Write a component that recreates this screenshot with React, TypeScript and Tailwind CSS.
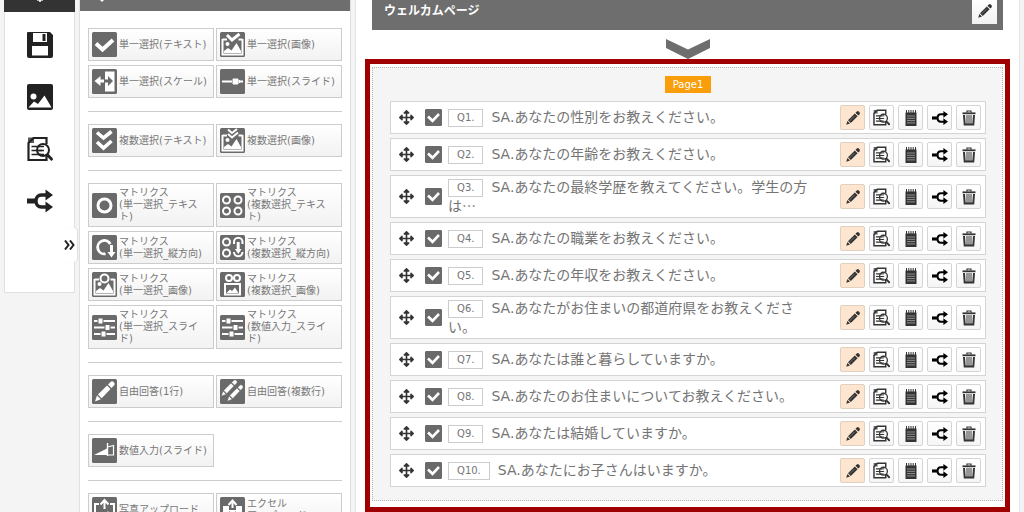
import type { ReactNode } from "react";
import { FaArrowsAlt } from "react-icons/fa";

type IconProps = { className?: string };

function SaveIcon({ className }: IconProps) {
  return (
    <svg viewBox="0 0 26 26" className={className} fill="currentColor">
      <path
        fillRule="evenodd"
        d="M1 0H23L26 3V24a2 2 0 0 1-2 2H2a2 2 0 0 1-2-2V1a1 1 0 0 1 1-1ZM6 1v9h14V1ZM5 14v9.500h16V14Z"
      />
      <path d="M15.500 2h3v7h-3z" />
    </svg>
  );
}

function ImageIcon({ className }: IconProps) {
  return (
    <svg viewBox="0 0 26 26" className={className}>
      <rect width="26" height="26" rx="2" fill="currentColor" />
      <circle cx="6.500" cy="12.500" r="3" fill="#fff" />
      <path d="M1.500 23.500 L7 17.500 L11 20 L17.500 11.500 L24.500 23.500Z" fill="#fff" />
    </svg>
  );
}

function PreviewIcon({ className }: IconProps) {
  return (
    <svg viewBox="0 0 26 26" className={className} fill="none" stroke="currentColor" strokeWidth="2.200">
      <path d="M19.500 8V2H6.500L1.500 7V24H19.500V20" />
      <path d="M1 1.500 7 1.500V7H1Z" fill="currentColor" stroke="none" opacity=".75" />
      <path d="M4.500 10.500H13M4.500 14.500H15M4.500 18.500H14" strokeWidth="1.700" />
      <circle cx="16" cy="14" r="6" strokeWidth="2" />
      <path d="M12 10.500H17M11 14.500H17M12 18.500H17" strokeWidth="1.500" />
      <path d="M20 18.500 L25.500 24" strokeWidth="3" />
    </svg>
  );
}

function BranchIcon({ className }: IconProps) {
  return (
    <svg viewBox="0 0 26 26" className={className} fill="none" stroke="currentColor" strokeWidth="3.400">
      <path d="M0 13H8" strokeWidth="5" />
      <path d="M20 7H14.500C11 7 9 9.500 9 13s2 6 5.500 6H20" />
      <path d="M18.500 1.500 26 7 18.500 12.500ZM18.500 13.500 26 19 18.500 24.500Z" fill="currentColor" stroke="none" />
    </svg>
  );
}

function PencilIcon({ className }: IconProps) {
  return (
    <svg viewBox="0 0 16 16" className={className} fill="currentColor">
      <path d="M1.200 14.800 2.400 11 5 13.600Z" />
      <path d="M3 10.200 9.800 3.400 12.600 6.200 5.800 13Z" />
      <path d="M10.500 2.700 11.800 1.500a1.500 1.500 0 0 1 2 0l.7.7a1.500 1.500 0 0 1 0 2L13.300 5.500Z" />
      <path d="M4.600 10.900 9.600 5.900" stroke="#999" strokeWidth=".6" />
    </svg>
  );
}

function NotepadIcon({ className }: IconProps) {
  return (
    <svg viewBox="0 0 16 16" className={className}>
      <path d="M2.500 2.500h11V16h-11z" fill="currentColor" />
      <path d="M3.500 0v3M5.800 0v3M8 0v3M10.200 0v3M12.500 0v3" stroke="currentColor" strokeWidth="1" />
      <path d="M4 6h8M4 8.300h8M4 10.600h8M4 12.900h8" stroke="#aaa" strokeWidth=".8" />
    </svg>
  );
}

function TrashIcon({ className }: IconProps) {
  return (
    <svg viewBox="0 0 16 16" className={className} fill="none" stroke="currentColor">
      <path d="M1.500 3.300h13" strokeWidth="1.800" />
      <path d="M6 2.500V1h4v1.500" strokeWidth="1.200" />
      <path d="M3 5 3.700 14.500h8.600L13 5" strokeWidth="2" />
      <path d="M6 5v9M8 5v9M10 5v9" strokeWidth="1" />
    </svg>
  );
}

const picture = (
  <>
    <path d="M2.500 7V22.500H22.500V7" />
    <path d="M2.500 7.500H7M18.500 7.500H22.500" />
    <path d="M4 21V19L8 16 11.500 18.500 16.500 11 21 19V21Z" fill="#fff" stroke="none" />
    <circle cx="7.500" cy="12" r="2" fill="#fff" stroke="none" />
  </>
);

const sliders = (
  <>
    <path d="M2 6H23M2 12.500H23M2 19H23" />
    <path d="M6 3h5v6H6zM13 9.500h5v6h-5zM9 16h5v6H9z" fill="#fff" stroke="#6a6a6a" strokeWidth="1" />
  </>
);

const pen = (
  <>
    <path d="M3 22.500 5 16.500 8.800 20.300Z" />
    <path d="M6 15.500 15 6.500 18.500 10 9.700 19.300Z" />
    <path d="M16 5.500 18.500 3a2 2 0 0 1 3 0l.5.500a2 2 0 0 1 0 3L19.500 9Z" />
  </>
);

const glyphs: Record<string, ReactNode> = {
  check: <path d="M4 11.500 10.500 17.500 21 8" strokeWidth="4" />,
  checkPicture: (
    <>
      {picture}
      <path d="M7 3 12 8 19.500 2" strokeWidth="3" />
    </>
  ),
  scale: (
    <>
      <path d="M13 2.500H22.500V22.500H13Z" fill="#fff" stroke="none" />
      <path d="M2.500 12 8.500 7V10.500H12V13.500H8.500V17Z" fill="#fff" stroke="none" />
      <path d="M21 12 16 7V10.500H13V13.500H16V17Z" fill="#6a6a6a" stroke="none" />
    </>
  ),
  slide: (
    <>
      <path d="M2 12.500H12M18.500 12.500H23" />
      <path d="M13 10h5v5h-5zM19.500 11v3" fill="#fff" strokeWidth="1" />
    </>
  ),
  doubleCheck: <path d="M5 4.500 11.500 10 19.500 3.500M5 14 11.500 20 19.500 13" strokeWidth="3.600" />,
  doubleCheckPicture: (
    <>
      {picture}
      <path d="M8 1.500 12 5 17 1M8 6 12 9.500 18 4.500" />
    </>
  ),
  circle: <circle cx="12.500" cy="12.500" r="6.500" strokeWidth="3" />,
  circles: (
    <>
      <circle cx="6.500" cy="7" r="3.500" />
      <circle cx="18" cy="7" r="3.500" />
      <circle cx="6.500" cy="18" r="3.500" />
      <circle cx="18" cy="18" r="3.500" />
    </>
  ),
  circleDown: (
    <>
      <path d="M13.500 18.800A6.700 6.700 0 1 1 18.300 9" strokeWidth="2.800" />
      <path d="M19.500 10V18" strokeWidth="3" />
      <path d="M15.500 17h8l-4 5.500Z" fill="#fff" stroke="none" />
    </>
  ),
  circlesDown: (
    <>
      <circle cx="6.500" cy="7" r="3.500" />
      <circle cx="6.500" cy="18" r="3.500" />
      <path d="M14 9V7a4 4 0 0 1 8.500 0V9M14 17a4 4 0 0 0 8.500 0" />
      <path d="M18.200 7V15" strokeWidth="3" />
      <path d="M15 14h6.500l-3.200 5Z" fill="#fff" stroke="none" />
    </>
  ),
  circlePicture: (
    <>
      {picture}
      <circle cx="12.500" cy="6.500" r="4" />
    </>
  ),
  circlesPicture: (
    <>
      <circle cx="9" cy="6" r="3" />
      <circle cx="17" cy="6" r="3" />
      <path d="M5 12H20V22.500H5Z" />
      <path d="M6.500 21 10 17.500 12 19 15 15.500 18.500 21Z" fill="#fff" stroke="none" />
    </>
  ),
  sliders,
  pen: (
    <g fill="#fff" stroke="none">
      {pen}
    </g>
  ),
  pens: (
    <g fill="#fff" stroke="#6a6a6a" strokeWidth=".4">
      <g transform="translate(-1 -1) scale(.8)">{pen}</g>
      <g transform="translate(5 4) scale(.8)">{pen}</g>
    </g>
  ),
  wedge: (
    <>
      <path d="M2 17 15 10.500V17Z" fill="#fff" stroke="none" />
      <path d="M15.500 9 21.500 7.500V17H15.500" strokeWidth="1.200" />
      <path d="M15.500 5V18" strokeWidth="1.400" />
    </>
  ),
  photoUpload: (
    <>
      <path d="M7 7H3V23H7M18 7H22V23H18" />
      <path d="M12.500 3V12M8.500 7.500 12.500 3 16.500 7.500" />
      <path d="M6 21 10 15 13 18 16 14 20 21Z" fill="#fff" stroke="none" />
    </>
  ),
  excelUpload: (
    <>
      <path d="M3 9H9V13H16V9H22V23H3Z" fill="#fff" stroke="none" />
      <path d="M12.500 11V4M8.500 8 12.500 3.500 16.500 8" />
      <path d="M9 15 16 22M16 15 9 22" stroke="#6a6a6a" />
    </>
  ),
};

function Glyph({ name }: { name: string }) {
  return (
    <svg viewBox="0 0 25 25" className="size-[25px] shrink-0" fill="none" stroke="#fff" strokeWidth="2">
      <rect width="25" height="25" rx="1.500" fill="#6a6a6a" stroke="none" />
      {glyphs[name]}
    </svg>
  );
}

type Tool = { icon: string; lines: string[]; tall?: boolean };

const toolGroups: Tool[][] = [
  [
    { icon: "check", lines: ["単一選択(テキスト)"] },
    { icon: "checkPicture", lines: ["単一選択(画像)"] },
    { icon: "scale", lines: ["単一選択(スケール)"] },
    { icon: "slide", lines: ["単一選択(スライド)"] },
  ],
  [
    { icon: "doubleCheck", lines: ["複数選択(テキスト)"] },
    { icon: "doubleCheckPicture", lines: ["複数選択(画像)"] },
  ],
  [
    { icon: "circle", lines: ["マトリクス", "(単一選択_テキスト)"], tall: true },
    { icon: "circles", lines: ["マトリクス", "(複数選択_テキスト)"], tall: true },
    { icon: "circleDown", lines: ["マトリクス", "(単一選択_縦方向)"] },
    { icon: "circlesDown", lines: ["マトリクス", "(複数選択_縦方向)"] },
    { icon: "circlePicture", lines: ["マトリクス", "(単一選択_画像)"] },
    { icon: "circlesPicture", lines: ["マトリクス", "(複数選択_画像)"] },
    { icon: "sliders", lines: ["マトリクス", "(単一選択_スライド)"], tall: true },
    { icon: "sliders", lines: ["マトリクス", "(数値入力_スライド)"], tall: true },
  ],
  [
    { icon: "pen", lines: ["自由回答(1行)"] },
    { icon: "pens", lines: ["自由回答(複数行)"] },
  ],
  [{ icon: "wedge", lines: ["数値入力(スライド)"] }],
  [
    { icon: "photoUpload", lines: ["写真アップロード"] },
    { icon: "excelUpload", lines: ["エクセル", "アップロード"] },
  ],
];

const questions = [
  "あなたの性別をお教えください。",
  "あなたの年齢をお教えください。",
  "あなたの最終学歴を教えてください。学生の方は…",
  "あなたの職業をお教えください。",
  "あなたの年収をお教えください。",
  "あなたがお住まいの都道府県をお教えください。",
  "あなたは誰と暮らしていますか。",
  "あなたのお住まいについてお教えください。",
  "あなたは結婚していますか。",
  "あなたにお子さんはいますか。",
];

const sideItems = [
  { label: "保存", Icon: SaveIcon },
  { label: "画像", Icon: ImageIcon },
  { label: "プレビュー", Icon: PreviewIcon },
  { label: "分岐", Icon: BranchIcon },
];

const actions = [
  { label: "編集", Icon: PencilIcon, size: "size-4", active: true },
  { label: "プレビュー", Icon: PreviewIcon, size: "size-[17px]" },
  { label: "メモ", Icon: NotepadIcon, size: "size-4" },
  { label: "分岐", Icon: BranchIcon, size: "size-4 text-black" },
  { label: "削除", Icon: TrashIcon, size: "size-4" },
];

function Sidebar() {
  return (
    <aside className="relative w-[71px] shrink-0 self-start">
      <div className="flex h-3 justify-center bg-[#333]">
        <svg viewBox="0 0 8 4" className="h-1 w-2" stroke="#fff" fill="none">
          <path d="M4 0V2" strokeWidth="1.600" />
          <path d="M1 .3H7" strokeWidth=".8" />
        </svg>
      </div>
      <nav className="flex flex-col items-center gap-[26px] border border-t-0 border-[#e0e0e0] bg-white pt-5 pb-[78px] text-[#222]">
        {sideItems.map(({ label, Icon }) => (
          <button key={label} aria-label={label} className="cursor-pointer">
            <Icon className="size-[26px]" />
          </button>
        ))}
      </nav>
      <button
        aria-label="開く"
        className="absolute top-[228px] -right-[2px] flex h-[34px] w-[15px] items-center justify-center rounded-r bg-white shadow-[1px_0_1px_#ddd]"
      >
        <svg viewBox="0 0 11 10" className="h-[10px] w-[11px]" fill="none" stroke="#222" strokeWidth="2">
          <path d="M1 .5 4.500 5 1 9.500M6 .5 9.500 5 6 9.500" />
        </svg>
      </button>
    </aside>
  );
}

function ToolButton({ icon, lines, tall }: Tool) {
  return (
    <button
      className={`flex items-center gap-[2px] border border-[#ccc] bg-linear-to-b from-white to-[#f2f2f2] px-[3px] text-left text-[10px] leading-3 text-[#777] ${
        tall ? "h-11" : "h-[33px]"
      }`}
    >
      <Glyph name={icon} />
      <span>
        {lines.map((line) => (
          <span key={line} className="block">
            {line}
          </span>
        ))}
      </span>
    </button>
  );
}

function Palette() {
  return (
    <section className="w-[272px] shrink-0 overflow-hidden border-x border-[#e0e0e0] bg-white">
      <div className="h-[11px] bg-[#6e6e6e] pl-5">
        <svg viewBox="0 0 4 2" className="h-[2px] w-1">
          <path d="M0 0H4L2 2Z" fill="#fff" />
        </svg>
      </div>
      <div className="px-2 pt-[17px]">
        {toolGroups.map((group, i) => (
          <div
            key={i}
            className={`grid grid-cols-2 gap-x-[2px] gap-y-1 ${i > 0 ? "mt-[13px] border-t border-[#ccc] pt-3" : ""}`}
          >
            {group.map((tool) => (
              <ToolButton key={tool.lines.join()} {...tool} />
            ))}
          </div>
        ))}
      </div>
    </section>
  );
}

function QuestionRow({ no, title }: { no: number; title: string }) {
  return (
    <li className="flex min-h-[33px] items-center border border-[#d4d4d4] bg-white py-[2px] pr-1 pl-2 text-[#333]">
      <FaArrowsAlt className="size-[15px] shrink-0" />
      <span className="relative ml-[11px] size-[17px] shrink-0">
        <input
          type="checkbox"
          defaultChecked
          aria-label={`Q${no}.`}
          className="peer block size-[17px] appearance-none rounded-[1px] border border-[#6a6a6a] checked:bg-[#6a6a6a]"
        />
        <svg
          viewBox="0 0 17 17"
          className="pointer-events-none absolute inset-0 hidden peer-checked:block"
          fill="none"
          stroke="#fff"
          strokeWidth="2.600"
        >
          <path d="M3 7.500 7.500 11.800 14 5" />
        </svg>
      </span>
      <p className="ml-[6px] min-w-0 flex-1 text-sm leading-[17px] text-[#747474]">
        <span className="mr-2 inline-block h-[18px] border border-[#ccc] px-2 align-middle text-[10px] leading-4">
          Q{no}.
        </span>
        SA.<span className="font-['Noto_Sans_CJK_JP',sans-serif]">{title}</span>
      </p>
      <div className="ml-5 flex gap-1">
        {actions.map(({ label, Icon, size, active }) => (
          <button
            key={label}
            aria-label={label}
            className={`flex size-[25px] cursor-pointer items-center justify-center rounded-[2px] border ${
              active ? "border-[#e0d0c0] bg-[#fee5cf]" : "border-[#d4d4d4] bg-linear-to-b from-white to-[#f5f5f5]"
            }`}
          >
            <Icon className={size} />
          </button>
        ))}
      </div>
    </li>
  );
}

export default function App() {
  return (
    <div
      lang="ja"
      className="flex h-screen gap-1 overflow-hidden bg-[#f4f4f4] px-1 font-['DejaVu_Sans','Noto_Sans_CJK_JP',sans-serif]"
    >
      <Sidebar />
      <Palette />
      <main className="min-w-0 flex-1 border-x border-[#e4e4e4] bg-white">
        <header className="mx-4 flex h-[30px] items-center justify-between bg-[#6e6e6e] pr-[6px] pb-2 pl-3">
          <h1 className="text-xs font-bold text-white">ウェルカムページ</h1>
          <button
            aria-label="編集"
            className="flex size-[25px] items-center justify-center bg-linear-to-b from-white to-[#f2f2f2] text-[#333]"
          >
            <PencilIcon className="size-4" />
          </button>
        </header>
        <svg viewBox="0 0 44 20" className="mx-auto mt-[9px] h-5 w-11" fill="#6e6e6e">
          <path d="M0 0 22 10.500 44 0V9L22 20 0 9Z" />
        </svg>
        <section className="mx-[9px] border-[5px] border-[#a00000] bg-white px-[2px] pt-[3px] pb-[6px]">
          <div className="border border-dotted border-[#b4b4b4] bg-[#f5f5f5] pt-2 pr-4 pb-[13px] pl-[17px]">
            <h2 className="mx-auto w-fit bg-[#f99d0a] px-2 text-[10px] leading-[17px] text-white">Page1</h2>
            <ol className="mt-2 flex flex-col gap-1">
              {questions.map((title, i) => (
                <QuestionRow key={title} no={i + 1} title={title} />
              ))}
            </ol>
          </div>
        </section>
      </main>
    </div>
  );
}
